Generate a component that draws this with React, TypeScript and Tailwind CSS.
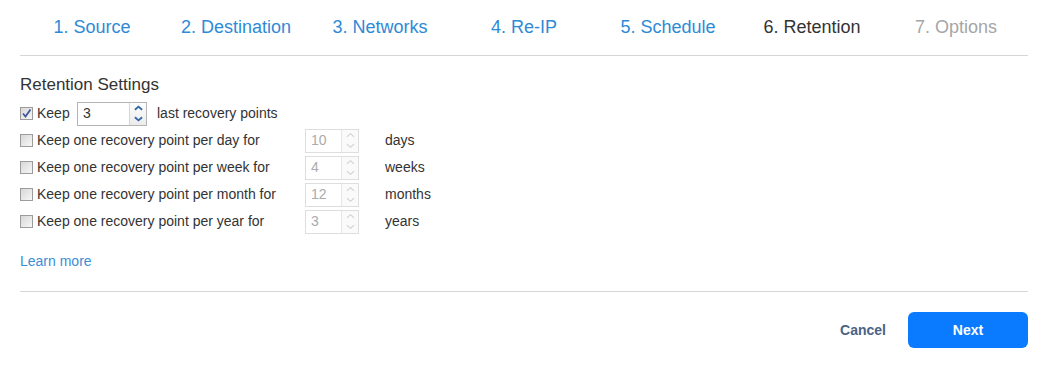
import React from "react";

const steps = [
  { label: "1. Source", state: "done" },
  { label: "2. Destination", state: "done" },
  { label: "3. Networks", state: "done" },
  { label: "4. Re-IP", state: "done" },
  { label: "5. Schedule", state: "done" },
  { label: "6. Retention", state: "current" },
  { label: "7. Options", state: "todo" },
];

const rules = [
  { label: "Keep one recovery point per day for", value: "10", unit: "days" },
  { label: "Keep one recovery point per week for", value: "4", unit: "weeks" },
  { label: "Keep one recovery point per month for", value: "12", unit: "months" },
  { label: "Keep one recovery point per year for", value: "3", unit: "years" },
];

function Checkbox({ checked }: { checked?: boolean }) {
  return (
    <span className="relative inline-block w-[13px] h-[13px] shrink-0 border border-[#9c9c9c] bg-gradient-to-br from-[#d8d8d8] to-[#f7f7f7]">
      {checked && (
        <svg viewBox="0 0 13 13" className="absolute -left-px -top-px w-[13px] h-[13px]">
          <path d="M3 6.5 L5.5 9.5 L10.5 2.5" fill="none" stroke="#3b5998" strokeWidth="1.8" />
        </svg>
      )}
    </span>
  );
}

function Spinner({ value, width, disabled }: { value: string; width: string; disabled?: boolean }) {
  const arrow = disabled ? "#cfcfcf" : "#2f66a8";
  return (
    <div
      className={`flex h-[24px] border bg-white ${width} ${
        disabled ? "border-[#dedede] text-[#ababab]" : "border-[#b5b5b5] text-[#333]"
      }`}
    >
      <div className="flex-1 flex items-center pl-[5px] text-[14px]">{value}</div>
      <div
        className={`w-[17px] flex flex-col border-l ${
          disabled ? "border-[#e6e6e6] bg-[#fafafa]" : "border-[#d6d6d6] bg-gradient-to-b from-[#fdfdfd] to-[#ececec]"
        }`}
      >
        <div className="flex-1 grid place-items-center">
          <svg viewBox="0 0 10 6" className="w-[9px] h-[6px]">
            <path d="M1 5 L5 1.5 L9 5" fill="none" stroke={arrow} strokeWidth={disabled ? 1.2 : 2} />
          </svg>
        </div>
        <div className="flex-1 grid place-items-center">
          <svg viewBox="0 0 10 6" className="w-[9px] h-[6px]">
            <path d="M1 1 L5 4.5 L9 1" fill="none" stroke={arrow} strokeWidth={disabled ? 1.2 : 2} />
          </svg>
        </div>
      </div>
    </div>
  );
}

export default function App() {
  return (
    <div className="w-[1048px] h-[368px] bg-white px-5 font-['Liberation_Sans',Arial,sans-serif] text-[#333]">
      <nav className="grid grid-cols-7 h-[56px] items-center border-b border-[#d6d6d6]">
        {steps.map((s) => (
          <div
            key={s.label}
            className={`text-center text-[18px] ${
              s.state === "done" ? "text-[#2e8ad6]" : s.state === "current" ? "text-[#333]" : "text-[#a6a6a6]"
            }`}
          >
            {s.label}
          </div>
        ))}
      </nav>

      <h2 className="mt-[19px] text-[17px] leading-[20px] text-[#333]">Retention Settings</h2>

      <div className="mt-[5px] text-[14px]">
        <div className="flex items-center h-[27px]">
          <Checkbox checked />
          <span className="ml-[4px] w-[40px]">Keep</span>
          <Spinner value="3" width="w-[70px]" />
          <span className="ml-[10px]">last recovery points</span>
        </div>
        {rules.map((r) => (
          <div key={r.unit} className="flex items-center h-[27px]">
            <Checkbox />
            <span className="ml-[4px] w-[268px]">{r.label}</span>
            <Spinner value={r.value} width="w-[54px]" disabled />
            <span className="ml-[26px]">{r.unit}</span>
          </div>
        ))}
      </div>

      <a className="block mt-[17px] text-[14px] leading-[18px] text-[#3a8ed6]">Learn more</a>

      <div className="mt-[21px] border-t border-[#d6d6d6]" />

      <div className="mt-[20px] flex justify-end items-center gap-[22px]">
        <button className="text-[14px] font-bold text-[#4a6386]">Cancel</button>
        <button className="w-[120px] h-[36px] rounded-[6px] bg-[#0a7bff] text-white text-[14px] font-bold">
          Next
        </button>
      </div>
    </div>
  );
}
